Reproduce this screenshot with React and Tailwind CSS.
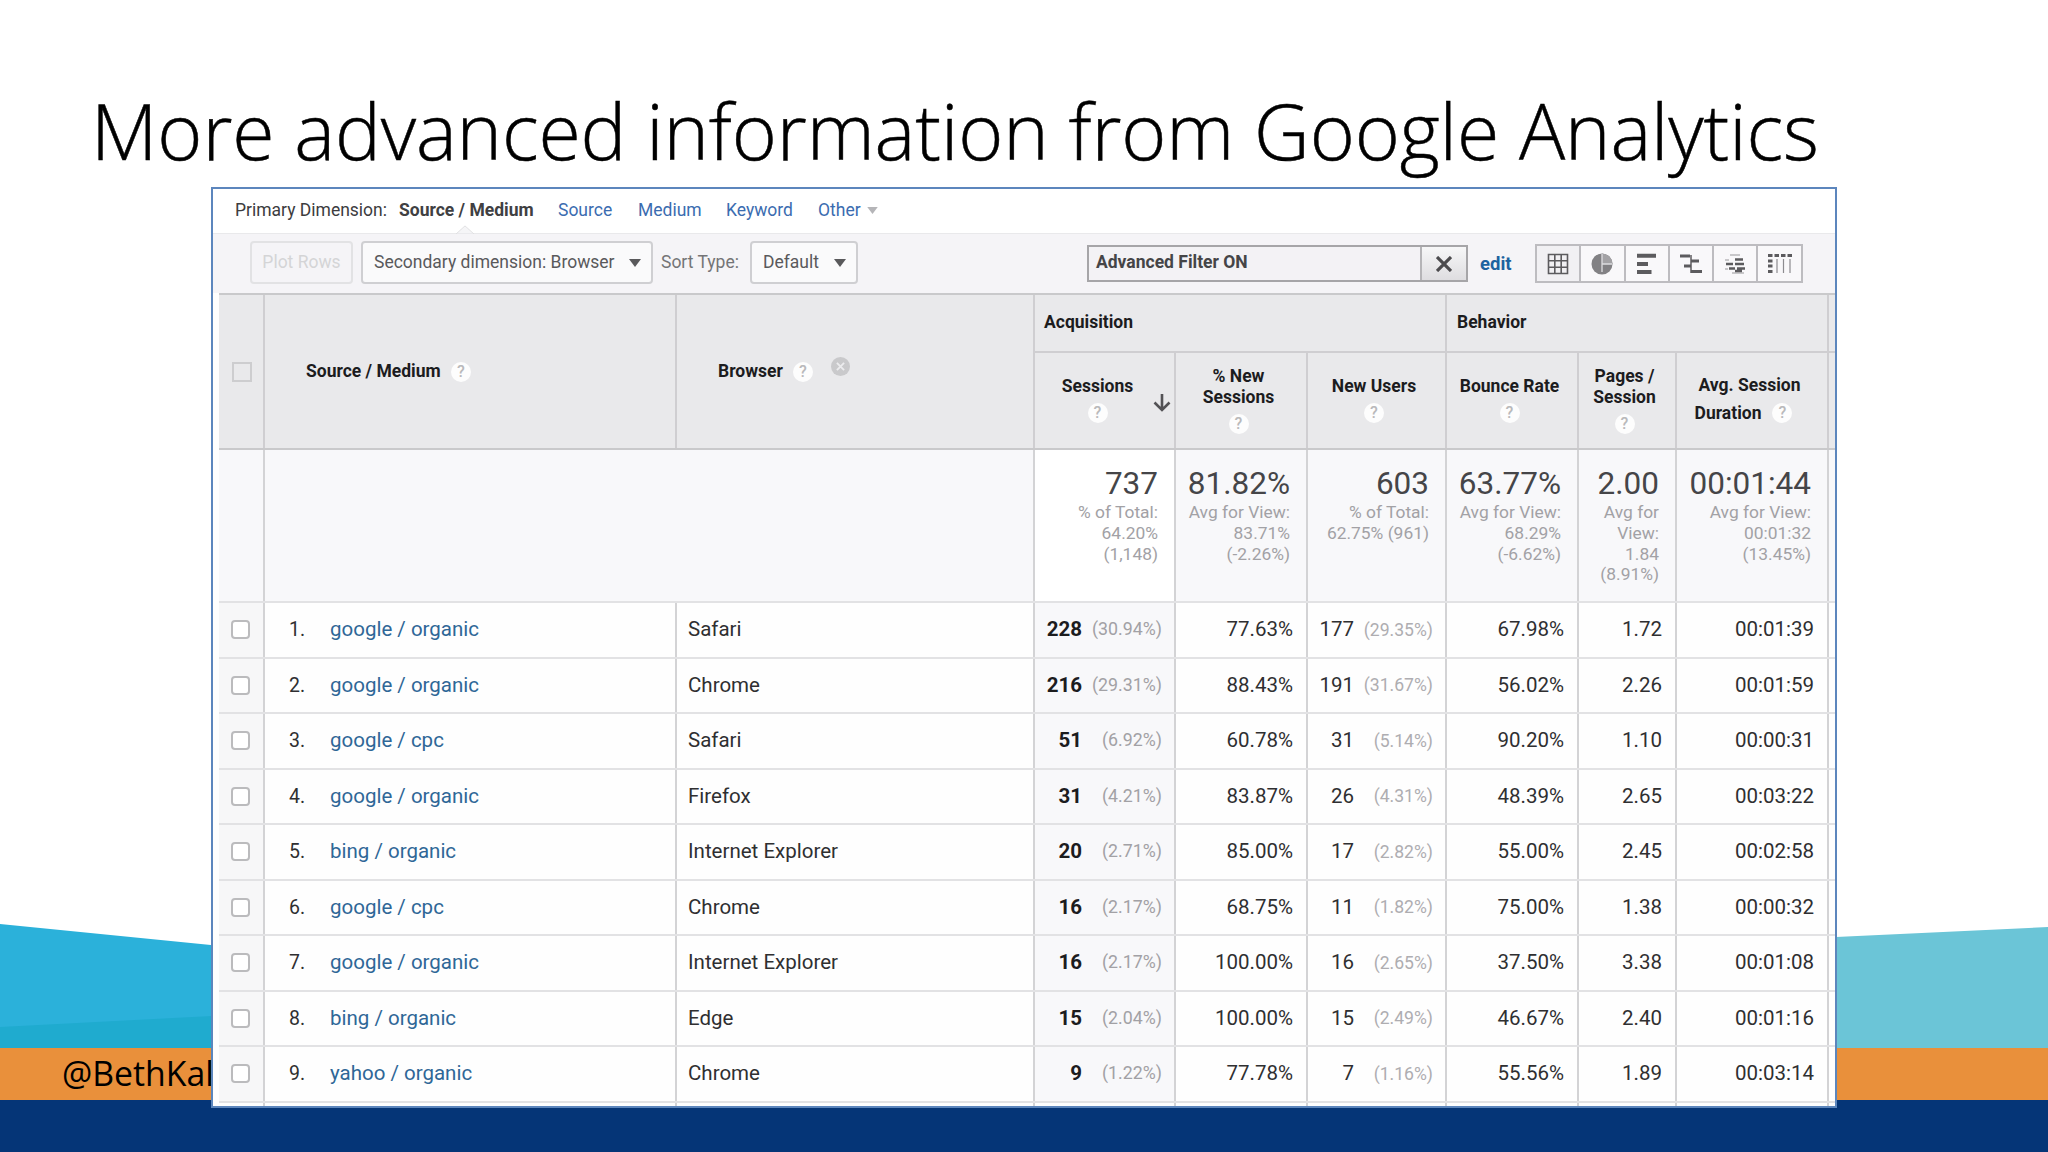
import React from 'react';
import { clsx } from 'clsx';

const GRID = 'grid grid-cols-[46px_412px_358px_141px_132px_139px_132px_98px_152px_6px]';

const tabs = ['Source', 'Medium', 'Keyword'];

const metrics = [
  { value: '737', lines: ['% of Total:', '64.20%', '(1,148)'], white: true },
  { value: '81.82%', lines: ['Avg for View:', '83.71%', '(-2.26%)'] },
  { value: '603', lines: ['% of Total:', '62.75% (961)'] },
  { value: '63.77%', lines: ['Avg for View:', '68.29%', '(-6.62%)'] },
  { value: '2.00', lines: ['Avg for', 'View:', '1.84', '(8.91%)'] },
  { value: '00:01:44', lines: ['Avg for View:', '00:01:32', '(13.45%)'] },
];

const rows = [
  ['google / organic', 'Safari', '228', '(30.94%)', '77.63%', '177', '(29.35%)', '67.98%', '1.72', '00:01:39'],
  ['google / organic', 'Chrome', '216', '(29.31%)', '88.43%', '191', '(31.67%)', '56.02%', '2.26', '00:01:59'],
  ['google / cpc', 'Safari', '51', '(6.92%)', '60.78%', '31', '(5.14%)', '90.20%', '1.10', '00:00:31'],
  ['google / organic', 'Firefox', '31', '(4.21%)', '83.87%', '26', '(4.31%)', '48.39%', '2.65', '00:03:22'],
  ['bing / organic', 'Internet Explorer', '20', '(2.71%)', '85.00%', '17', '(2.82%)', '55.00%', '2.45', '00:02:58'],
  ['google / cpc', 'Chrome', '16', '(2.17%)', '68.75%', '11', '(1.82%)', '75.00%', '1.38', '00:00:32'],
  ['google / organic', 'Internet Explorer', '16', '(2.17%)', '100.00%', '16', '(2.65%)', '37.50%', '3.38', '00:01:08'],
  ['bing / organic', 'Edge', '15', '(2.04%)', '100.00%', '15', '(2.49%)', '46.67%', '2.40', '00:01:16'],
  ['yahoo / organic', 'Chrome', '9', '(1.22%)', '77.78%', '7', '(1.16%)', '55.56%', '1.89', '00:03:14'],
];

function Help({ className }) {
  return (
    <span className={clsx('flex size-[20px] shrink-0 items-center justify-center rounded-full bg-[#fdfdfd] text-[16px] leading-none font-medium text-[#b9b9bb]', className)}>
      ?
    </span>
  );
}

function Triangle({ className }) {
  return (
    <svg viewBox="0 0 12 8" className={className}>
      <path d="M0 0h12L6 8z" fill="currentColor" />
    </svg>
  );
}

function ViewIcon({ name }) {
  return (
    <svg viewBox="0 0 24 24" className="size-[24px]" fill="none" stroke="#5c5b5e" strokeWidth="1.6">
      {name === 'table' && <path d="M2.5 2.5h19v19h-19zM8.8 2.5v19M15.2 2.5v19M2.5 8.8h19M2.5 15.2h19" />}
      {name === 'pie' && (
        <>
          <circle cx="12" cy="12" r="10.5" fill="#828184" stroke="none" />
          <path d="M12 1.5V12h10.5A10.5 10.5 0 0 0 12 1.5z" fill="#a3a2a5" stroke="none" />
          <path d="M12 2v18M12 12h10" stroke="#dddde0" strokeWidth="1.3" />
        </>
      )}
      {name === 'bars' && <path d="M2 3.8h19M2 12h11M2 20h14.500" strokeWidth="4" />}
      {name === 'compare' && (
        <>
          <path d="M1 4h10M12 9h8M5 14h7M12 19.500h11" strokeWidth="2.800" />
          <path d="M12 3v18" strokeWidth="1.500" />
        </>
      )}
      {name === 'cloud' && (
        <>
          <path d="M7 3h10M2 8h4M2 17h3M9 21h12" strokeWidth="1" stroke="#98979a" />
          <path d="M12 7.500h8M3 12h7M12 12h9M6 16.500h6M14 16.500h8M12 19h7" strokeWidth="2.400" />
        </>
      )}
      {name === 'pivot' && (
        <>
          <path d="M0 3.500h4.500M6.500 3.500h4.500M13 3.500h4.500M19.500 3.500h4.500" strokeWidth="3" />
          <path d="M0 9h4.500M0 14h4.500M0 19.500h4.500" strokeWidth="3" />
          <path d="M9 7v14M15.500 7v14M22 7v14" strokeWidth="1.200" stroke="#8d8c90" />
        </>
      )}
    </svg>
  );
}

function MetricHead({ lines, sorted, children }) {
  return (
    <div className={clsx('relative flex flex-col items-center justify-center border-r-2 border-[#cfced1] pb-[2px]', sorted ? 'pr-[14px]' : 'pr-[5px]')}>
      <div className="text-center leading-[21px]">
        {lines.map((line) => <div key={line}>{line}</div>)}
      </div>
      {children || <Help className="mt-[6px]" />}
      {sorted && (
        <svg viewBox="0 0 18 18" className="absolute top-[41px] right-[3px] size-[18px]" fill="none" stroke="#535255" strokeWidth="2.600">
          <path d="M9 0v16M1.500 8.500 9 16l7.500-7.500" />
        </svg>
      )}
    </div>
  );
}

function PrimaryDimension() {
  return (
    <div className="relative flex h-[44px] items-center bg-white pb-[2px] pl-[22px] text-[17.5px] whitespace-nowrap text-[#3b6cb0]">
      <span className="w-[164px] text-[#3c3c3e]">Primary Dimension:</span>
      <span className="w-[159px] font-bold text-[#404042]">Source / Medium</span>
      <span className="w-[80px]">{tabs[0]}</span>
      <span className="w-[88px]">{tabs[1]}</span>
      <span className="w-[92px]">{tabs[2]}</span>
      <span>Other</span>
      <Triangle className="ml-[6px] h-[7px] w-[11px] text-[#b5b5b8]" />
      <svg viewBox="0 0 20 10" className="absolute bottom-[-1px] left-[242px] h-[9px] w-[20px]">
        <path d="M0 10 10 1l10 9z" fill="#f5f5f7" stroke="#dedee0" />
      </svg>
    </div>
  );
}

function Toolbar() {
  const views = ['table', 'pie', 'bars', 'compare', 'cloud', 'pivot'];

  return (
    <div className="flex h-[60px] items-start border-t border-[#e9e9eb] bg-[#f5f4f7] pt-[7px] pl-[37px] text-[17.5px] whitespace-nowrap text-[#59595b]">
      <div className="flex h-[43px] w-[103px] items-center justify-center rounded-[4px] border-2 border-[#e2e2e4] text-[#d4d4d6]">Plot Rows</div>
      <div className="ml-[8px] flex h-[43px] w-[292px] items-center justify-between rounded-[4px] border-2 border-[#cfcfd2] bg-[#fafafb] pr-[10px] pl-[11px]">
        <span>Secondary dimension: Browser</span>
        <Triangle className="h-[8px] w-[12px]" />
      </div>
      <span className="ml-[8px] w-[89px] leading-[42px] text-[#747476]">Sort Type:</span>
      <div className="flex h-[43px] w-[108px] items-center justify-between rounded-[4px] border-2 border-[#cfcfd2] bg-[#fafafb] pr-[10px] pl-[11px]">
        <span>Default</span>
        <Triangle className="h-[8px] w-[12px]" />
      </div>

      <div className="mt-[4px] ml-[229px] flex h-[37px] w-[381px] border-2 border-[#a6a5a8] bg-[#f3f2f5]">
        <span className="flex-1 pl-[7px] leading-[30px] font-bold text-[#454547]">Advanced Filter ON</span>
        <span className="flex w-[46px] items-center justify-center border-l-2 border-[#b5b4b7] bg-linear-to-b from-[#f7f7f8] to-[#dedde0]">
          <svg viewBox="0 0 16 16" className="size-[16px]" stroke="#4c4b4e" strokeWidth="3.200">
            <path d="M1 1l14 14M15 1 1 15" />
          </svg>
        </span>
      </div>
      <span className="ml-[12px] w-[55px] text-[18.500px] leading-[47px] font-bold text-[#1d63a0]">edit</span>

      <div className="mt-[3px] flex h-[39px] border-2 border-r-0 border-[#bdbcc0] bg-[#f9f8fa]">
        {views.map((view) => (
          <span key={view} className={clsx('flex w-[44.3px] items-center justify-center border-r-2 border-[#bdbcc0]', view === 'table' && 'bg-[#f1f0f3]')}>
            <ViewIcon name={view} />
          </span>
        ))}
      </div>
    </div>
  );
}

function TableHead() {
  return (
    <div className={clsx(GRID, 'h-[157px] border-y-2 border-[#c9c9cb] bg-[#e9e9eb] text-[17.5px] font-bold text-[#1c1c1e]')}>
      <div className="flex items-center justify-center border-r-2 border-[#cfced1]">
        <span className="ml-[2px] size-[20px] border-2 border-[#cdcdcf]" />
      </div>
      <div className="flex items-center border-r-2 border-[#cfced1] pl-[41px]">
        <span className="w-[145px]">Source / Medium</span>
        <Help />
      </div>
      <div className="flex items-center border-r-2 border-[#cfced1] pl-[41px]">
        <span className="w-[75px]">Browser</span>
        <Help />
        <span className="mb-[10px] ml-[18px] flex size-[19px] items-center justify-center rounded-full bg-[#c9c9cb]">
          <svg viewBox="0 0 10 10" className="size-[9px]" stroke="#ececee" strokeWidth="2">
            <path d="M1 1l8 8M9 1 1 9" />
          </svg>
        </span>
      </div>
      <div className="col-span-3 grid grid-cols-[141px_132px_139px] grid-rows-[58px_1fr]">
        <div className="col-span-3 border-r-2 border-b-2 border-[#cfced1] pl-[9px] leading-[55px]">Acquisition</div>
        <MetricHead lines={['Sessions']} sorted />
        <MetricHead lines={['% New', 'Sessions']} />
        <MetricHead lines={['New Users']} />
      </div>
      <div className="col-span-3 grid grid-cols-[132px_98px_152px] grid-rows-[58px_1fr]">
        <div className="col-span-3 border-r-2 border-b-2 border-[#cfced1] pl-[10px] leading-[55px]">Behavior</div>
        <MetricHead lines={['Bounce Rate']} />
        <MetricHead lines={['Pages /', 'Session']} />
        <MetricHead lines={['Avg. Session']}>
          <div className="mt-[5px] flex items-center gap-[11px] pr-[12px] leading-[24px]">
            Duration
            <Help />
          </div>
        </MetricHead>
      </div>
      <div className="pt-[56px]">
        <div className="border-b-2 border-[#cfced1]" />
      </div>
    </div>
  );
}

function Summary() {
  return (
    <div className={clsx(GRID, 'h-[153px] border-b-2 border-[#e2e2e4] bg-[#f8f8fa]')}>
      <div className="border-r-2 border-[#d3d3d5]" />
      <div />
      <div className="border-r-2 border-[#d3d3d5]" />
      {metrics.map((m) => (
        <div key={m.value} className={clsx('border-r-2 border-[#d3d3d5] pt-[15px] pr-[16px] text-right whitespace-nowrap', m.white && 'bg-white')}>
          <div className="text-[31.5px] leading-[38px] text-[#454548]">{m.value}</div>
          <div className="mt-[-1px] text-[17.4px] leading-[20.8px] text-[#a2a1a5]">
            {m.lines.map((line) => <div key={line}>{line}</div>)}
          </div>
        </div>
      ))}
      <div />
    </div>
  );
}

function Row({ row, index }) {
  const [source, browser, sessions, sessionsPct, newPct, users, usersPct, bounce, pages, duration] = row;
  const cell = 'flex items-center border-r-2 border-[#d3d3d5]';

  return (
    <div className={clsx(GRID, 'h-[55.5px] border-b-2 border-[#e2e2e4] bg-[#fefefe] text-[20.5px] whitespace-nowrap text-[#2f2f31]')}>
      <div className={clsx(cell, 'justify-center bg-[#f7f7f8]')}>
        <span className="mr-[1px] size-[19px] rounded-[4px] border-2 border-[#bbbbbd] bg-white" />
      </div>
      <div className={clsx(cell, 'pl-[24px]')}>
        <span className="w-[41px] text-[19.5px]">{index + 1}.</span>
        <span className="text-[#2f6797]">{source}</span>
      </div>
      <div className={clsx(cell, 'pl-[11px]')}>{browser}</div>
      <div className={clsx(cell, 'justify-end bg-[#f8f8fa] pr-[12px]')}>
        <span className="font-bold text-[#1c1c1e]">{sessions}</span>
        <span className="w-[80px] text-right text-[17.8px] text-[#a2a1a5]">{sessionsPct}</span>
      </div>
      <div className={clsx(cell, 'justify-end pr-[13px]')}>{newPct}</div>
      <div className={clsx(cell, 'justify-end pr-[12px]')}>
        {users}
        <span className="w-[79px] text-right text-[17.6px] text-[#aeadb1]">{usersPct}</span>
      </div>
      <div className={clsx(cell, 'justify-end pr-[13px]')}>{bounce}</div>
      <div className={clsx(cell, 'justify-end pr-[13px]')}>{pages}</div>
      <div className={clsx(cell, 'justify-end pr-[13px]')}>{duration}</div>
      <div />
    </div>
  );
}

function Backdrop() {
  return (
    <div className="absolute inset-x-0 bottom-0 flex h-[232px] flex-col">
      <svg viewBox="0 0 2048 128" className="h-[128px] w-full shrink-0">
        <path d="M0 4l1000 100v24H0z" fill="#2bb1da" />
        <path d="M0 107l1000-52v73H0z" fill="#1fabcf" />
        <path d="M1000 50l836-33 212-10v121H1000z" fill="#6bc5d7" />
      </svg>
      <div className="h-[52px] bg-[#e9903b] pl-[62px] font-['Open_Sans',sans-serif] text-[35px] leading-[50px] text-black">
        <span className="inline-block origin-left scale-x-[0.965]">@BethKal</span>
      </div>
      <div className="flex-1 bg-[#053577]" />
    </div>
  );
}

export default function App() {
  return (
    <div className="relative h-[1152px] w-[2048px] overflow-hidden bg-white font-['Roboto',sans-serif]">
      <Backdrop />

      <div className="relative">
        <h1 className="h-[187px] pt-[78px] pl-[91px] font-['Open_Sans',sans-serif] text-[77px] leading-[106px] font-light tracking-[-0.12px] whitespace-nowrap text-black [-webkit-text-stroke:0.5px_black]">
          More advanced information from Google Analytics
        </h1>

        <div className="ml-[211px] h-[921px] w-[1626px] overflow-hidden border-2 border-[#5c86bd] bg-[#fefefe]">
          <PrimaryDimension />
          <Toolbar />
          <div className="ml-[6px]">
            <TableHead />
            <Summary />
            {rows.map((row, i) => <Row key={i} row={row} index={i} />)}
            <div className={clsx(GRID, 'h-[6px]')}>
              {[0, 1, 2, 3, 4, 5, 6, 7, 8].map((n) => <div key={n} className="border-r-2 border-[#d3d3d5]" />)}
            </div>
          </div>
        </div>
      </div>
    </div>
  );
}
